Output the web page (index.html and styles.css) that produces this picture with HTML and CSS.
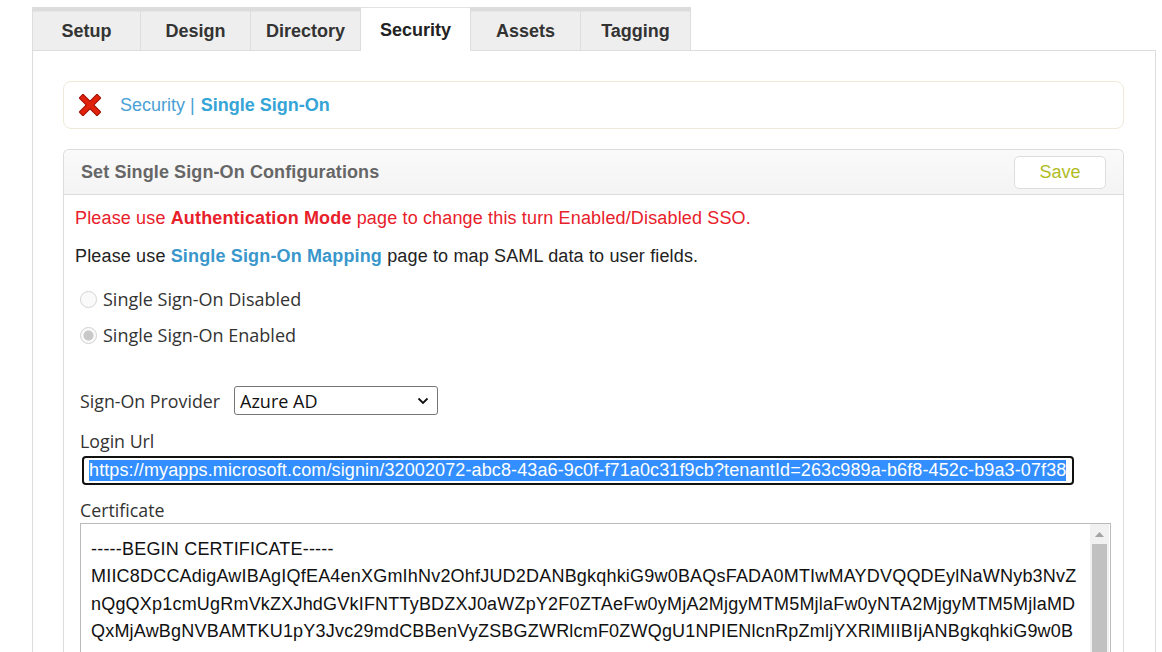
FILE: index.html
```html
<!DOCTYPE html>
<html>
<head>
<meta charset="utf-8">
<link rel="stylesheet" href="styles.css">
</head>
<body>
<div class="page">
  <div class="tabs">
    <div class="tab">Setup</div>
    <div class="tab">Design</div>
    <div class="tab">Directory</div>
    <div class="tab active">Security</div>
    <div class="tab">Assets</div>
    <div class="tab">Tagging</div>
  </div>
  <div class="content">
    <div class="crumb">
      <svg class="x-icon" width="22" height="22" viewBox="0 0 22 22">
        <path d="M4 4 L18 18 M18 4 L4 18" stroke="#9e0d00" stroke-width="6.5" stroke-linecap="square"/>
        <path d="M4 4 L18 18 M18 4 L4 18" stroke="#e0220c" stroke-width="4.5" stroke-linecap="square"/>
      </svg>
      <span class="crumb-parent">Security |</span>
      <span class="crumb-current">Single Sign-On</span>
    </div>
    <div class="panel">
      <div class="panel-head">
        <div class="panel-title">Set Single Sign-On Configurations</div>
        <button class="save">Save</button>
      </div>
      <div class="panel-body">
        <p class="note warn">Please use <b>Authentication Mode</b> page to change this turn Enabled/Disabled SSO.</p>
        <p class="note">Please use <b class="link">Single Sign-On Mapping</b> page to map SAML data to user fields.</p>
        <div class="radios">
          <label class="radio"><span class="dot"></span>Single Sign-On Disabled</label>
          <label class="radio"><span class="dot checked"></span>Single Sign-On Enabled</label>
        </div>
        <div class="form">
          <div class="provider">
            <span class="label">Sign-On Provider</span>
            <div class="select">
              <span>Azure AD</span>
              <svg width="12" height="8" viewBox="0 0 12 8"><path d="M1.5 1.5 L6 6 L10.5 1.5" fill="none" stroke="#111" stroke-width="1.8"/></svg>
            </div>
          </div>
          <div class="field">
            <span class="label">Login Url</span>
            <div class="url-input"><span class="sel">https://myapps.microsoft.com/signin/32002072-abc8-43a6-9c0f-f71a0c31f9cb?tenantId=263c989a-b6f8-452c-b9a3-07f38</span></div>
          </div>
          <div class="field">
            <span class="label">Certificate</span>
            <div class="textarea">
              <div class="cert">-----BEGIN CERTIFICATE-----
MIIC8DCCAdigAwIBAgIQfEA4enXGmIhNv2OhfJUD2DANBgkqhkiG9w0BAQsFADA0MTIwMAYDVQQDEylNaWNyb3NvZ
nQgQXp1cmUgRmVkZXJhdGVkIFNTTyBDZXJ0aWZpY2F0ZTAeFw0yMjA2MjgyMTM5MjlaFw0yNTA2MjgyMTM5MjlaMD
QxMjAwBgNVBAMTKU1pY3Jvc29mdCBBenVyZSBGZWRlcmF0ZWQgU1NPIENlcnRpZmljYXRlMIIBIjANBgkqhkiG9w0B</div>
              <div class="scrollbar">
                <div class="arrow"><svg width="9" height="5" viewBox="0 0 9 5"><path d="M0 5 L4.5 0 L9 5 Z" fill="#a3a3a3"/></svg></div>
                <div class="thumb"></div>
              </div>
            </div>
          </div>
        </div>
      </div>
    </div>
  </div>
</div>
</body>
</html>
```

FILE: styles.css
```css
* { box-sizing: border-box; }
html, body { margin: 0; padding: 0; background: #fff; }
body {
  font-family: "Liberation Sans", Arial, sans-serif;
  color: #333;
  overflow: hidden;
  height: 652px;
}
.page {
  padding: 7px 0 0 32px;
  width: 1156px;
}
.tabs {
  display: flex;
  position: relative;
  z-index: 1;
  margin-bottom: -1px;
}
.tab {
  width: 110px;
  height: 44px;
  background: #eee;
  border: 1px solid #ddd;
  border-top: 4px solid #dcdcdc;
  border-left: none;
  box-shadow: inset 0 1px 0 #e6e6e6;
  font-weight: bold;
  font-size: 18px;
  color: #333;
  display: flex;
  align-items: center;
  justify-content: center;
  padding-top: 1px;
}
.tab:first-child { border-left: 1px solid #ddd; width: 109px; }
.tab.active {
  background: #fff;
  border-top: 1px solid #e3e3e3;
  border-bottom: 1px solid #fff;
  box-shadow: none;
  color: #222;
  padding-top: 3px;
}
.content {
  border: 1px solid #ddd;
  border-bottom: none;
  padding: 30px 31px 0 30px;
  height: 620px;
}
.crumb {
  height: 48px;
  border: 1px solid #efe9d9;
  border-radius: 8px;
  display: flex;
  align-items: center;
  padding-left: 15px;
  font-size: 18px;
}
.x-icon { margin-right: 19px; }
.crumb-parent { color: #4a9fd5; margin-right: 6px; }
.crumb-current { color: #35a4d6; font-weight: bold; }
.panel {
  margin-top: 20px;
  border: 1px solid #ddd;
  border-radius: 6px 6px 0 0;
  border-bottom: none;
  height: 520px;
}
.panel-head {
  height: 45px;
  background: linear-gradient(#fafafa, #f4f4f4);
  border-bottom: 1px solid #ddd;
  border-radius: 6px 6px 0 0;
  display: flex;
  align-items: center;
  justify-content: space-between;
  padding: 0 17px 0 17px;
}
.panel-title {
  font-weight: bold;
  font-size: 18px;
  color: #666;
  letter-spacing: 0.1px;
}
.save {
  width: 92px;
  height: 33px;
  background: #fff;
  border: 1px solid #ddd;
  border-radius: 5px;
  font-family: "Liberation Sans", Arial, sans-serif;
  font-size: 18px;
  color: #b1bc1f;
  padding: 0;
}
.panel-body { padding: 10px 11px 0 11px; }
.note {
  margin: 0;
  font-size: 18px;
  line-height: 26px;
  color: #222;
  letter-spacing: 0.15px;
}
.note + .note { margin-top: 12px; }
.warn { color: #e8202a; }
.link { color: #3a97cc; }
.radios {
  margin-top: 19px;
  padding-left: 5px;
  display: flex;
  flex-direction: column;
  gap: 14px;
}
.radio {
  font-family: "Open Sans", "Noto Sans", sans-serif;
  font-size: 18px;
  color: #333;
  display: flex;
  align-items: center;
  height: 22px;
}
.dot {
  width: 17px;
  height: 17px;
  border: 1px solid #d4d4d4;
  border-radius: 50%;
  background: #fafafa;
  margin-right: 6px;
  margin-top: 1px;
}
.dot.checked {
  border-color: #d0d0d0;
  background: radial-gradient(circle, #c8c8c8 0 4.5px, #fafafa 5.5px);
}
.form { padding-left: 5px; }
.label {
  font-family: "Open Sans", "Noto Sans", sans-serif;
  font-size: 17.8px;
  color: #333;
}
.provider {
  margin-top: 40px;
  display: flex;
  align-items: center;
  gap: 14px;
}
.select {
  width: 204px;
  height: 29px;
  border: 1px solid #767676;
  border-radius: 3px;
  display: flex;
  align-items: center;
  justify-content: space-between;
  padding: 0 8px 0 5px;
  font-family: "Open Sans", "Noto Sans", sans-serif;
  font-size: 18px;
  color: #111;
}
.field {
  display: flex;
  flex-direction: column;
  margin-top: 14px;
}
.field .label { line-height: 24px; }
.url-input {
  margin-top: 3px;
  margin-left: 2px;
  width: 992px;
  height: 29px;
  border: 2px solid #111;
  border-radius: 4px;
  padding: 0 6px 0 5px;
  overflow: hidden;
  white-space: nowrap;
  display: flex;
  align-items: center;
  font-size: 18px;
  letter-spacing: 0.12px;
}
.sel {
  background: #338fff;
  color: #fff;
  line-height: 21px;
}
.field + .field { margin-top: 13px; }
.textarea {
  margin-top: 1px;
  width: 1031px;
  height: 140px;
  border: 1px solid #bbb;
  border-bottom: none;
  display: flex;
}
.cert {
  flex: 1;
  white-space: pre;
  overflow: hidden;
  font-size: 18px;
  line-height: 27.3px;
  color: #111;
  padding: 12px 0 0 10px;
  letter-spacing: 0.2px;
}
.scrollbar {
  width: 19px;
  margin-right: 1px;
  background: #f1f1f1;
  display: flex;
  flex-direction: column;
}
.arrow {
  height: 20px;
  display: flex;
  align-items: center;
  justify-content: center;
}
.thumb {
  flex: 1;
  background: #c1c1c1;
  margin: 0 2px;
}
```
